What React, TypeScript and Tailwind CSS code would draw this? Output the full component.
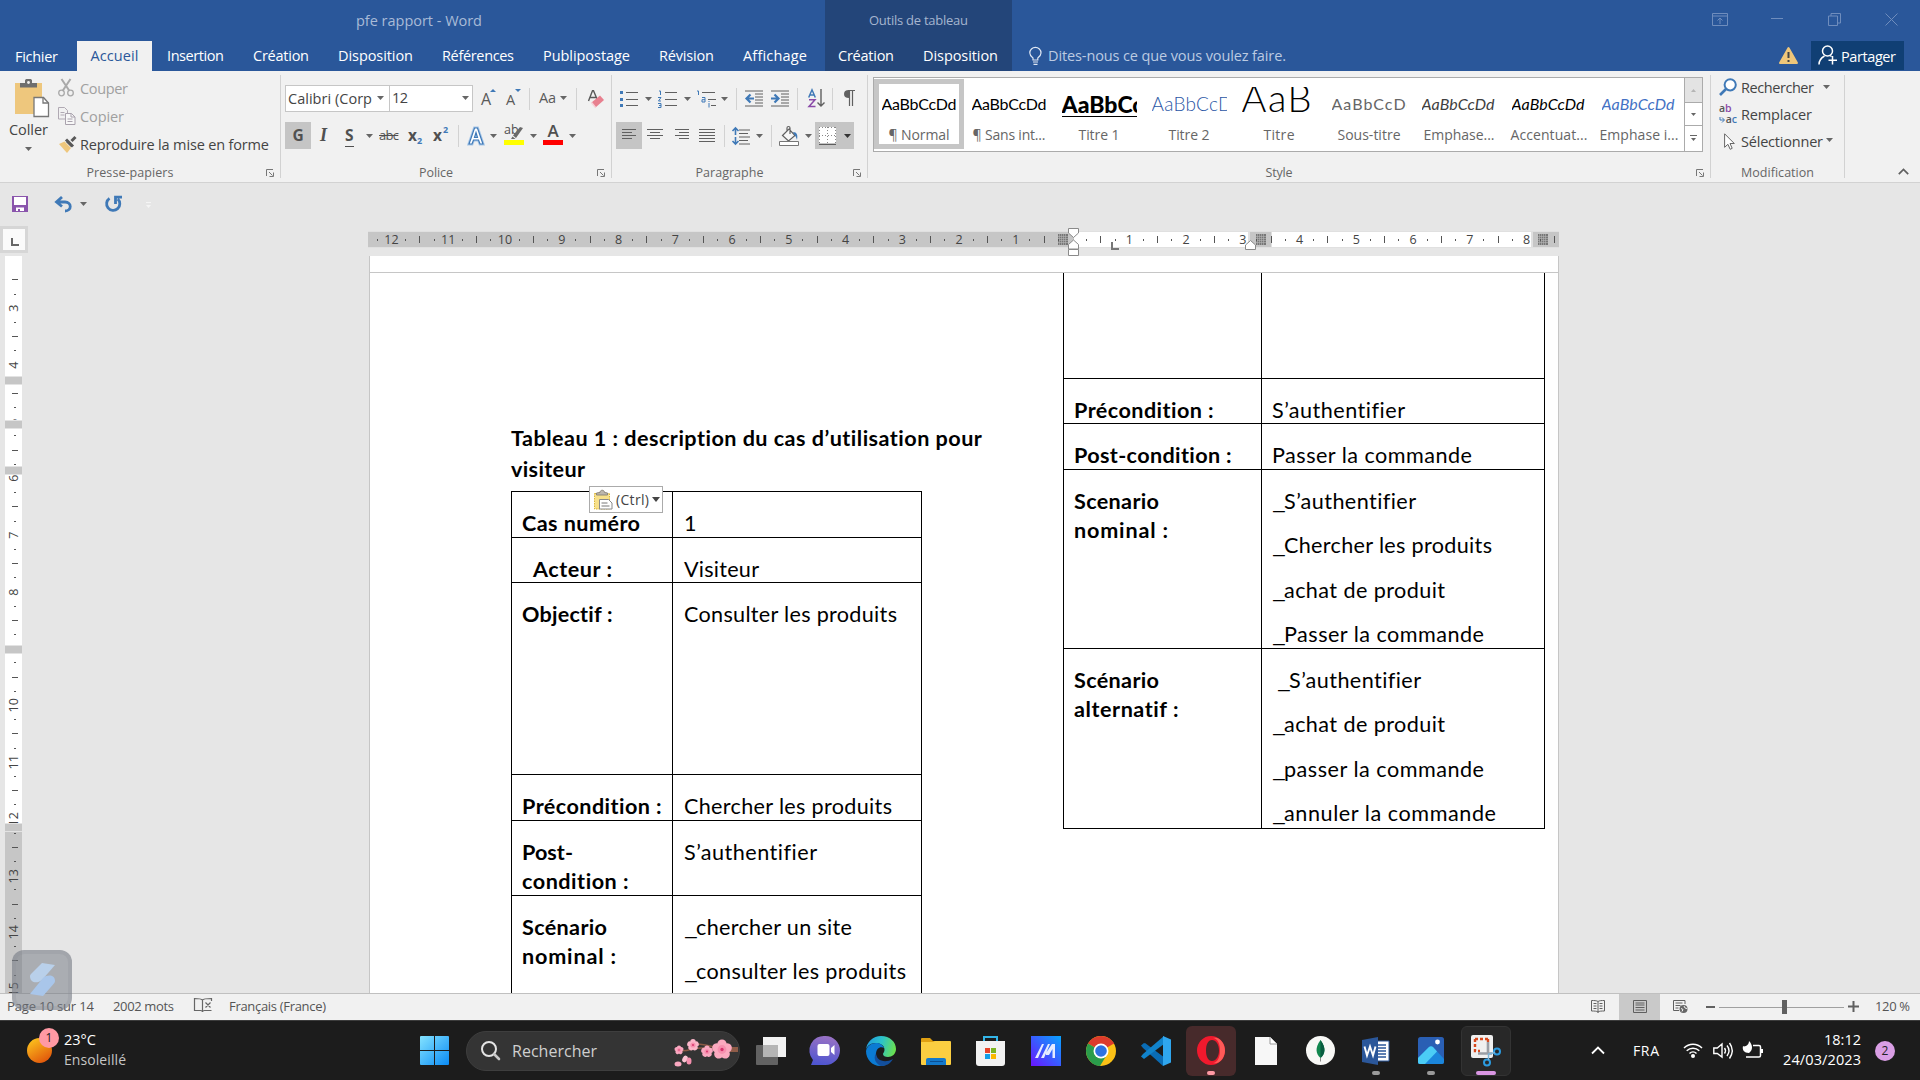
import React, { useLayoutEffect, useRef } from "react";

type Kids = { children?: React.ReactNode; className?: string };

/* Single-line label that spreads its letters over the width of its box. */
function Fit({ children, className = "" }: { children: string; className?: string }) {
  const box = useRef<HTMLSpanElement>(null);
  const inner = useRef<HTMLSpanElement>(null);
  useLayoutEffect(() => {
    const b = box.current;
    const s = inner.current;
    if (!b || !s) return;
    s.style.letterSpacing = "0px";
    const natural = s.getBoundingClientRect().width;
    const n = Math.max(1, children.length - 1);
    s.style.letterSpacing = `${(b.clientWidth - natural) / n}px`;
  }, [children]);
  return (
    <span ref={box} className={`inline-block shrink-0 whitespace-pre ${className}`}>
      <span ref={inner}>{children}</span>
    </span>
  );
}

function Icon({ w, h, className = "", children }: { w: number; h: number } & Kids) {
  return (
    <svg width={w} height={h} viewBox={`0 0 ${w} ${h}`} fill="none" className={`block shrink-0 overflow-visible ${className}`}>
      {children}
    </svg>
  );
}

const Arrow = ({ className = "", color = "#666" }: { className?: string; color?: string }) => (
  <Icon w={7} h={4} className={className}>
    <path d="M0 0h7L3.5 4z" fill={color} />
  </Icon>
);

const Sep = ({ className = "" }: { className?: string }) => <div className={`h-[22px] w-px shrink-0 bg-[#d2d2d2] ${className}`} />;

function Group({ label, labelClass, launcher = true, className = "", children }: { label: string; labelClass: string; launcher?: boolean } & Kids) {
  return (
    <section className={`flex h-[111px] shrink-0 ${className}`}>
      <div className="flex min-w-0 flex-1 flex-col">
        <div className="h-[92px]">{children}</div>
        <div className="flex h-[19px] items-center">
          <div className="flex flex-1 justify-center">
            <Fit className={`text-[12.5px] leading-5 text-[#666] ${labelClass}`}>{label}</Fit>
          </div>
          {launcher && (
            <div className="flex w-[20px] justify-center">
              <Icon w={8} h={8}>
                <path d="M.5 7V.5H7M3 3l3.500 3.500M7.500 3.500v4h-4" stroke="#777" />
              </Icon>
            </div>
          )}
        </div>
      </div>
      <div className="mt-1 h-[103px] w-px bg-[#d2d2d2]" />
    </section>
  );
}

/* ---------- Title bar and tabs ---------- */

function Header() {
  const tab = "text-[14.5px] leading-[30px] text-white";
  return (
    <header className="flex h-[71px] bg-[#2a579a]">
      <div className="flex w-[825px] flex-col">
        <div className="flex h-[41px] items-center pl-[356px]">
          <Fit className="w-[126px] text-[14.5px] text-[#a9bbd7]">pfe rapport - Word</Fit>
        </div>
        <nav className="flex h-[30px]">
          <div className="w-[77px] pl-[15px]"><Fit className={`w-[43px] ${tab} pt-px`}>Fichier</Fit></div>
          <div className="flex w-[75px] justify-center bg-[#f1f1f1]"><Fit className="w-[48px] text-[14.5px] leading-[30px] text-[#2a579a]">Accueil</Fit></div>
          <Fit className={`ml-[15px] w-[57px] ${tab}`}>Insertion</Fit>
          <Fit className={`ml-[29px] w-[56px] ${tab}`}>Création</Fit>
          <Fit className={`ml-[29px] w-[75px] ${tab}`}>Disposition</Fit>
          <Fit className={`ml-[29px] w-[72px] ${tab}`}>Références</Fit>
          <Fit className={`ml-[29px] w-[87px] ${tab}`}>Publipostage</Fit>
          <Fit className={`ml-[29px] w-[55px] ${tab}`}>Révision</Fit>
          <Fit className={`ml-[29px] w-[64px] ${tab}`}>Affichage</Fit>
        </nav>
      </div>
      <div className="flex w-[187px] flex-col bg-[#234579]">
        <div className="flex h-[41px] items-center justify-center pt-px">
          <Fit className="w-[99px] text-[13px] text-[#a5b5cf]">Outils de tableau</Fit>
        </div>
        <div className="flex h-[30px] pl-[13px]">
          <Fit className={`w-[56px] ${tab}`}>Création</Fit>
          <Fit className={`ml-[29px] w-[75px] ${tab}`}>Disposition</Fit>
        </div>
      </div>
      <div className="flex flex-1 flex-col">
        <div className="flex h-[41px] justify-end pt-[13px] pr-[22px]">
          <Icon w={16} h={13}><path d="M.5.5h15v12H.5zM.5 3h15M8 11V5M5.500 7.500 8 5l2.500 2.500" stroke="#6f8dbd" /></Icon>
          <Icon w={12} h={13} className="ml-[43px]"><path d="M0 5.500h12" stroke="#6f8dbd" /></Icon>
          <Icon w={13} h={13} className="ml-[45px]"><path d="M.5 3h9v9.500h-9zM3 3V.5h9.500V10H9.500" stroke="#6f8dbd" /></Icon>
          <Icon w={13} h={13} className="ml-[44px]"><path d="M.5.5l12 12M12.500.5l-12 12" stroke="#6f8dbd" /></Icon>
        </div>
        <div className="flex h-[30px] pl-[17px]">
          <Icon w={13} h={18} className="mt-[6px]">
            <path d="M4 13v-2C2 9.500.8 8 .8 6a5.600 5.600 0 0 1 11.200 0c0 2-1.200 3.500-3.200 5v2zM4 15h5M4.500 17.300h4" stroke="#dfe7f3" strokeWidth="1.200" />
          </Icon>
          <Fit className="ml-[6px] w-[238px] text-[14.5px] leading-[30px] text-[#bccbe2]">Dites-nous ce que vous voulez faire.</Fit>
          <div className="flex-1" />
          <Icon w={19} h={17} className="mt-[6px]">
            <path d="M9.500 1 18 16H1z" fill="#efc67a" stroke="#efc67a" strokeWidth="2" strokeLinejoin="round" /><path d="M9.500 5v6M9.500 13v2" stroke="#444" strokeWidth="2" />
          </Icon>
          <div className="mr-4 ml-[13px] flex h-[29px] w-[93px] bg-[#103f74] pl-[7px]">
            <Icon w={19} h={20} className="mt-1">
              <circle cx="9.500" cy="6" r="5" stroke="#fff" strokeWidth="1.500" />
              <path d="M1 19.500c0-4 2-6.500 5.500-8.500M12 10.500l1.500 1M14.500 11v8.500M10.500 15.300h8.500" stroke="#fff" strokeWidth="1.500" />
            </Icon>
            <Fit className="ml-[4px] w-[55px] text-[14.5px] leading-[31px] text-white">Partager</Fit>
          </div>
        </div>
      </div>
    </header>
  );
}

/* ---------- Ribbon ---------- */

function Clipboard() {
  const t = "text-[14.5px] leading-[20px]";
  return (
    <Group label="Presse-papiers" labelClass="w-[87px]" className="w-[281px]">
      <div className="flex pt-[8px]">
        <div className="w-[57px]">
          <Icon w={36} h={38} className="ml-[14px]">
            <path d="M1 4h27v31H1z" fill="#eec77d" />
            <path d="M6 8.500V4h5V1.500C11 .5 12 0 13 0h3c1 0 2 .5 2 1.500V4h5v4.500z" fill="#6e6e6e" /><circle cx="14.500" cy="3.500" r="1.400" fill="#f1f1f1" />
            <path d="M20 18.500h9.500l5 5.500v13.500H20z" fill="#fff" stroke="#777" strokeWidth="1.300" /><path d="M29 18.500V24h5.500" stroke="#777" strokeWidth="1.300" />
          </Icon>
          <Fit className={`ml-[9px] mt-[2px] w-[39px] text-[#444] ${t}`}>Coller</Fit>
          <Arrow className="mt-[6px] ml-[25px]" />
        </div>
        <div className="flex flex-col">
          <div className="flex h-[28px]">
            <Icon w={17} h={18} className="ml-px">
              <path d="M3.500 0l8 12M12.500 0l-8 12" stroke="#a9a9a9" strokeWidth="2" /><circle cx="3.500" cy="14" r="2.800" stroke="#a9a9a9" strokeWidth="1.300" /><circle cx="12.500" cy="14" r="2.800" stroke="#a9a9a9" strokeWidth="1.300" />
            </Icon>
            <Fit className={`ml-[5px] w-[48px] text-[#a0a0a0] ${t}`}>Couper</Fit>
          </div>
          <div className="flex h-[28px]">
            <Icon w={18} h={18} className="ml-px">
              <path d="M.5.500h6l3 3v8.500h-9zM2.500 5.500h4M2.500 8h4" stroke="#b0a9b3" />
              <path d="M7.500 6.500h6l3.500 3.500v7.500H7.500z" fill="#f7f7f7" stroke="#a9a2ad" /><path d="M9.500 12h5M9.500 14.500h5M13 6.500V10h4" stroke="#a9a2ad" />
            </Icon>
            <Fit className={`ml-[4px] w-[44px] text-[#a0a0a0] ${t}`}>Copier</Fit>
          </div>
          <div className="flex h-[28px]">
            <Icon w={18} h={17} className="ml-[2px] mt-px">
              <path d="M0 8l5.500-2.500 6.500 6.500-4 5z" fill="#eec77d" /><path d="M7 3.500l7 7M8 5l5 5M12.500 5 16.500 1" stroke="#595959" strokeWidth="3" />
            </Icon>
            <Fit className={`ml-[3px] w-[189px] text-[#444] ${t}`}>Reproduire la mise en forme</Fit>
          </div>
        </div>
      </div>
    </Group>
  );
}

function FontGroup() {
  return (
    <Group label="Police" labelClass="w-[34px]" className="w-[331px]">
      <div className="flex h-[41px] items-center pt-[14px] pl-1">
        <div className="flex h-[27px] w-[104px] items-center border border-r-0 border-[#c6c6c6] bg-white pb-[2px] pl-[2px]">
          <div className="w-[85px] overflow-hidden"><Fit className="w-[84px] text-[14.5px] text-[#444]">Calibri (Corp</Fit></div>
          <Arrow className="ml-[4px]" />
        </div>
        <div className="flex h-[27px] w-[84px] items-center border border-[#c6c6c6] bg-white pb-[2px] pl-[2px]">
          <Fit className="w-[16px] text-[14.5px] text-[#444]">12</Fit>
          <Arrow className="ml-[54px]" />
        </div>
        <div className="ml-2 flex w-4 text-[16px] leading-[20px] text-[#5a5a5a]">A<Icon w={6} h={3} className="-ml-px"><path d="M0 3h6L3 0z" fill="#3f79b7" /></Icon></div>
        <div className="ml-[9px] flex w-[15px] pt-[2px] text-[14.5px] leading-[20px] text-[#5a5a5a]">A<Icon w={6} h={3} className="mt-[-1px]"><path d="M0 0h6L3 3z" fill="#3f79b7" /></Icon></div>
        <Sep className="ml-2" />
        <Fit className="ml-[9px] w-[17px] pb-[2px] text-[14.5px] text-[#5a5a5a]">Aa</Fit>
        <Arrow className="-mt-[2px] ml-[4px]" />
        <Sep className="ml-[9px]" />
        <Icon w={16} h={18} className="ml-[11px]">
          <path d="M.5 11 4.500.800h1L9 9M2 7.500h6" stroke="#5a5a5a" strokeWidth="1.400" /><path d="M3.500 12.500 12 5.500l4 4.500-8.500 7.500z" fill="#e8808f" /><path d="M3.500 12.500l4 5" stroke="#f7d2d8" strokeWidth="1.500" />
        </Icon>
      </div>
      <div className="mt-[10px] flex h-[27px] items-center pl-1 text-[#505050]">
        <div className="flex h-[27px] w-[26px] items-center justify-center bg-[#c5c5c5] text-[15.5px] font-bold">G</div>
        <span className="ml-[9px] w-2 font-['Liberation_Serif'] text-[18px] font-bold italic">I</span>
        <span className="ml-[17px] w-[10px] text-[15.5px] leading-[15px] font-bold"><span className="border-b-[1.5px] border-[#505050]">S</span></span>
        <Arrow className="ml-[11px]" />
        <Fit className="ml-[6px] w-5 pt-px text-[13px] line-through">abc</Fit>
        <span className="relative ml-[9px] w-[14px] text-[15.5px] font-bold">x<span className="absolute top-[10px] left-[9px] text-[9px] text-[#3f79b7]">2</span></span>
        <span className="relative ml-[11px] w-[15px] text-[15.5px] font-bold">x<span className="absolute -top-[1px] left-[10px] text-[9px] text-[#3f79b7]">2</span></span>
        <Sep className="ml-[10px]" />
        <Icon w={16} h={18} className="ml-[9px]">
          <path d="M1 17 6.500 1h3L15 17h-3l-1.500-4h-5L4 17zM6.500 10.500h3L8 5.500z" stroke="#a9c8e8" strokeWidth="3" /><path d="M1 17 6.500 1h3L15 17h-3l-1.500-4h-5L4 17zM6.500 10.500h3L8 5.500z" fill="#fff" stroke="#3f79b7" strokeWidth="1.200" />
        </Icon>
        <Arrow className="ml-[6px]" />
        <div className="relative ml-[7px] h-[22px] w-5 text-[12.5px] leading-[10px]">
          ab
          <Icon w={13} h={14} className="absolute top-[2px] left-[6px]"><path d="M13 1 6 11l-3-2.500L10 0z" fill="#6a6a6a" /><path d="M2.500 9.500 5.500 12H1z" fill="#6a6a6a" /></Icon>
          <div className="absolute top-[15px] h-[5px] w-5 bg-[#ff0]" />
        </div>
        <Arrow className="ml-[6px]" />
        <div className="ml-[6px] flex h-[22px] w-5 flex-col items-center">
          <span className="h-[15px] text-[17px] leading-[12px] font-semibold">A</span>
          <div className="h-[5px] w-5 bg-[#f00]" />
        </div>
        <Arrow className="ml-[6px]" />
      </div>
    </Group>
  );
}

const Lines = ({ rows, w = 16, className = "" }: { rows: [number, number][]; w?: number; className?: string }) => (
  <Icon w={w} h={15} className={className}>
    {rows.map(([a, b], i) => <path key={i} d={`M${a} ${i * 3 + 1.5}H${b}`} stroke="#606060" />)}
  </Icon>
);

function Paragraph() {
  return (
    <Group label="Paragraphe" labelClass="w-[68px]" className="w-[256px]">
      <div className="flex h-[41px] items-center pt-[14px]">
        <Icon w={18} h={18} className="ml-2">
          <path d="M6 2.500h12M6 9.500h12M6 15.500h12" stroke="#606060" /><path d="M0 1h3v3H0zM0 8h3v3H0zM0 14h3v3H0z" fill="#3f79b7" />
        </Icon>
        <Arrow className="ml-[7px]" />
        <Icon w={19} h={18} className="ml-[6px]">
          <path d="M7 2.500h12M7 9.500h12M7 15.500h12" stroke="#606060" /><path d="M1 1h1.500v4M0 7.500h3L.5 11H3M0 13.500h3v4H0M1 15.500h2" stroke="#3f79b7" />
        </Icon>
        <Arrow className="ml-[7px]" />
        <Icon w={19} h={18} className="ml-[6px]">
          <path d="M5 2.500h13M11 9.500h8M14 15.500h5" stroke="#606060" /><path d="M0 1h1.500v4M5 7.500h3V12H5V9.700h3M12 12v-1M12 13v4.500" stroke="#3f79b7" />
        </Icon>
        <Arrow className="ml-[5px]" />
        <Sep className="ml-2" />
        <Icon w={18} h={17} className="ml-2">
          <path d="M0 1h18M10 4h8M10 7h8M10 10h8M10 13h8M0 16h18" stroke="#606060" /><path d="M9 8.500H2M5.500 4.500l-4 4 4 4" stroke="#3f79b7" strokeWidth="2.200" />
        </Icon>
        <Icon w={18} h={17} className="ml-2">
          <path d="M0 1h18M10 4h8M10 7h8M10 10h8M10 13h8M0 16h18" stroke="#606060" /><path d="M0 8.500h7M3.500 4.500l4 4-4 4" stroke="#3f79b7" strokeWidth="2.200" />
        </Icon>
        <Sep className="ml-2" />
        <Icon w={17} h={19} className="ml-[10px]">
          <path d="M.7 8.500 4 .800l3.300 7.700M2 6h4" stroke="#3f79b7" strokeWidth="1.500" /><path d="M1 10.800h6L1 17.500h6.500" stroke="#8a4aa8" strokeWidth="1.500" /><path d="M13 0v17M9.500 13.500 13 17l3.500-3.500" stroke="#606060" strokeWidth="1.400" />
        </Icon>
        <Sep className="ml-[7px]" />
        <Icon w={12} h={17} className="ml-[10px]">
          <path d="M5 .5h7M6.500.5v15.500M9.500.5v15.500" stroke="#606060" strokeWidth="1.200" /><path d="M6 0C2.500 0 1 1.500 1 4s1.500 4 5 4z" fill="#606060" />
        </Icon>
      </div>
      <div className="mt-[10px] flex h-[27px] items-center">
        <div className="ml-1 flex h-[27px] w-[26px] items-center justify-center bg-[#c5c5c5]"><Lines w={14} rows={[[0, 14], [0, 10], [0, 14], [0, 10]]} /></div>
        <Lines className="ml-[5px]" rows={[[0, 16], [3, 13], [0, 16], [3, 13]]} />
        <Lines className="ml-[10px]" rows={[[2, 16], [6, 16], [2, 16], [6, 16]]} />
        <Lines className="ml-[10px]" rows={[[0, 16], [0, 16], [0, 16], [0, 16], [0, 16]]} />
        <Sep className="ml-[9px]" />
        <Icon w={18} h={18} className="ml-[7px]">
          <path d="M7 3h11M7 6.500h9M7 10h11M7 13.500h9M7 17h11" stroke="#606060" /><path d="M3.500 1v7M3.500 10v7M.5 4l3-3 3 3M.5 14l3 3 3-3" stroke="#3f79b7" strokeWidth="1.600" />
        </Icon>
        <Arrow className="ml-[6px]" />
        <Sep className="ml-2" />
        <Icon w={20} h={20} className="ml-[7px]">
          <path d="M3.500 9.500 10 3l6 6.500-6.500 5.500zM8 6V2c0-2 3-2 3 0v6" stroke="#606060" strokeWidth="1.200" fill="#f7f7f7" /><path d="M14 6c4 0 5 3 4 8-1-3-1.500-4-2.500-5z" fill="#3f79b7" /><path d="M.5 15.500h19v4H.5z" fill="#fff" stroke="#777" />
        </Icon>
        <Arrow className="ml-[6px]" />
        <div className="ml-[3px] flex h-[27px] w-[39px] items-center bg-[#c5c5c5] pl-1">
          <Icon w={17} h={18}>
            <path d="M0 0h17v18H0z" fill="#fff" /><path d="M.5 0v17M16.500 0v17M0 .5h17M8.500 0v17M0 8.500h17" stroke="#888" strokeDasharray="1 2" /><path d="M0 17.300h17" stroke="#555" strokeWidth="1.300" />
          </Icon>
          <Arrow className="ml-[8px]" color="#333" />
        </div>
      </div>
    </Group>
  );
}

const styleCells: { sample: string; cls: string; name: string; nameCls: string }[] = [
  { sample: "AaBbCcDd", cls: "w-[75px] text-[16px] text-black", name: "¶ Normal", nameCls: "w-[61px]" },
  { sample: "AaBbCcDd", cls: "w-[75px] text-[16px] text-black", name: "¶ Sans int...", nameCls: "w-[73px]" },
  { sample: "AaBbCc", cls: "w-[82px] text-[23px] font-black text-black underline decoration-2 underline-offset-3", name: "Titre 1", nameCls: "w-[41px]" },
  { sample: "AaBbCcD", cls: "w-[81px] text-[19px] font-light text-[#2b57a5]", name: "Titre 2", nameCls: "w-[41px]" },
  { sample: "AaB", cls: "w-[70px] text-[38px] leading-[39px] font-light text-black", name: "Titre", nameCls: "w-[31px]" },
  { sample: "AaBbCcDd", cls: "w-[84px] text-[16px] text-[#666]", name: "Sous-titre", nameCls: "w-[63px]" },
  { sample: "AaBbCcDd", cls: "w-[73px] text-[16px] italic text-[#404040]", name: "Emphase...", nameCls: "w-[71px]" },
  { sample: "AaBbCcDd", cls: "w-[73px] text-[16px] italic text-black", name: "Accentuat...", nameCls: "w-[77px]" },
  { sample: "AaBbCcDd", cls: "w-[73px] text-[16px] italic text-[#4472c4]", name: "Emphase i...", nameCls: "w-[79px]" },
];

function Styles() {
  return (
    <Group label="Style" labelClass="w-[27px]" className="w-[843px]">
      <div className="pt-[6px] pl-[5px]">
        <div className="flex h-[75px] w-[830px] border border-[#ababab] bg-white">
          {styleCells.map((s, i) => (
            <div key={i} className={`mt-px flex h-[70px] w-[90px] shrink-0 flex-col items-center ${i === 0 ? "border-5 border-[#c6c6c6]" : "border-5 border-transparent"}`}>
              <div className="mt-[3px] flex h-[30px] w-[75px] shrink-0 items-end overflow-hidden font-[Lato] leading-[26px]">
                <Fit className={s.cls}>{s.sample}</Fit>
              </div>
              <Fit className={`mt-[8px] text-[14px] leading-[20px] text-[#666] ${s.nameCls}`}>{s.name}</Fit>
            </div>
          ))}
          <div className="flex flex-1 flex-col border-l border-[#ababab]">
            <div className="flex h-[25px] items-center justify-center border-b border-[#ababab] bg-[#e3e3e3]"><Icon w={5} h={3}><path d="M0 3h5L2.500 0z" fill="#b5b5b5" /></Icon></div>
            <div className="flex h-[23px] items-center justify-center border-b border-[#ababab]"><Icon w={5} h={3}><path d="M0 0h5L2.500 3z" fill="#666" /></Icon></div>
            <div className="flex flex-1 items-center justify-center"><Icon w={7} h={7}><path d="M0 .5h7" stroke="#666" /><path d="M1 3h5L3.500 6z" fill="#666" /></Icon></div>
          </div>
        </div>
      </div>
    </Group>
  );
}

function Editing() {
  const t = "text-[14.5px] leading-[20px] text-[#444]";
  return (
    <Group label="Modification" labelClass="w-[73px]" launcher={false} className="w-[134px]">
      <div className="flex flex-col pt-[7px] pl-[8px]">
        <div className="flex h-[27px]">
          <Icon w={18} h={18}><circle cx="11.200" cy="6.800" r="5.600" stroke="#3f79b7" strokeWidth="2" fill="#fff" /><path d="M7 11 1 17" stroke="#3f79b7" strokeWidth="2.600" /></Icon>
          <Fit className={`ml-1 w-[73px] ${t}`}>Rechercher</Fit>
          <Arrow className="mt-[7px] ml-[9px]" />
        </div>
        <div className="flex h-[27px]">
          <div className="w-[18px] text-[10.5px] leading-[7px] font-semibold">
            <div className="h-[11px] text-[#555]">a<span className="text-[#8a4aa8]">b</span></div>
            <div className="flex items-center justify-between"><Icon w={6} h={6}><path d="M1 0v3h4M3 .5 5.500 3 3 5.500" stroke="#3f79b7" /></Icon><span className="text-[#555]">a<span className="text-[#3f79b7]">c</span></span></div>
          </div>
          <Fit className={`ml-1 w-[71px] ${t}`}>Remplacer</Fit>
        </div>
        <div className="flex h-[27px]">
          <Icon w={11} h={17} className="mt-px ml-[5px]"><path d="M.6.800v13.500l3.300-3 2.300 5 2-1-2.200-4.800h4.300z" fill="#fff" stroke="#666" /></Icon>
          <Fit className={`ml-[6px] w-[82px] ${t}`}>Sélectionner</Fit>
          <Arrow className="mt-[6px] ml-[3px]" />
        </div>
      </div>
    </Group>
  );
}

function Ribbon() {
  return (
    <div className="flex h-[112px] border-b border-[#d2d2d2] bg-[#f1f1f1]">
      <Clipboard />
      <FontGroup />
      <Paragraph />
      <Styles />
      <Editing />
      <div className="flex flex-1 items-end justify-end pr-[11px] pb-[7px]">
        <Icon w={11} h={7}><path d="M.8 6.200 5.500 1.500l4.700 4.700" stroke="#606060" strokeWidth="1.700" /></Icon>
      </div>
    </div>
  );
}

function QuickAccess() {
  return (
    <div className="flex h-[43px] pt-[13px] pl-[12px]">
      <Icon w={16} h={16}><path d="M0 0h16v16H0z" fill="#8a55ac" /><path d="M2 1h12v8H2zM4 11.500h8V15H4z" fill="#fff" /><path d="M6 13h2v2H6z" fill="#8a55ac" /></Icon>
      <Icon w={18} h={16} className="ml-[26px]"><path d="M2.500 6H11c7 0 7 9 0 9M8 1 2.500 6 8 10.500" stroke="#3f79b7" strokeWidth="2.800" /></Icon>
      <Arrow className="mt-[6px] ml-[8px]" />
      <Icon w={17} h={16} className="ml-[18px]"><path d="M4.500 2.300A6.600 6.600 0 1 0 12.800 3M10.500 8V1.200H17" stroke="#3f79b7" strokeWidth="2.800" /></Icon>
      <Icon w={5} h={6} className="mt-[6px] ml-[24px]"><path d="M0 .5h5" stroke="#f5f5f5" /><path d="M0 3h5L2.500 6z" fill="#f5f5f5" /></Icon>
    </div>
  );
}

/* ---------- Rulers ---------- */

const hMarks = Array.from({ length: 84 }, (_, i) => i - 49);
const vMarks = Array.from({ length: 51 }, (_, i) => i + 10);

const Grid = ({ className = "" }: { className?: string }) => (
  <Icon w={10} h={11} className={className}>
    <path d="M0 0h10v11H0z" fill="#777" />
    <path d="M1.500 0v11M3.500 0v11M5.500 0v11M7.500 0v11M0 2.500h10M0 4.500h10M0 6.500h10M0 8.500h10" stroke="#b5b5b5" strokeWidth=".6" />
  </Icon>
);

function HRuler() {
  return (
    <div className="relative ml-[368px] h-[17px] w-[1191px]">
      <div className="flex h-[17px] items-center border-y border-[#e0e0e0]">
        <div className="flex h-full w-[706px] items-center bg-[#c6c6c6] pl-[690px]"><Grid /></div>
        <div className="h-full w-[174px] bg-white" />
        <div className="flex h-full w-[23px] items-center border-l-2 border-[#e0e0e0] bg-[#c6c6c6] pl-[6px]"><Grid /></div>
        <div className="h-full w-[260px] border-l border-[#e0e0e0] bg-white" />
        <div className="flex h-full flex-1 items-center border-l-2 border-[#e0e0e0] bg-[#c6c6c6] pl-[5px]"><Grid /></div>
      </div>
      <div className="absolute top-0 left-[2.2px] flex h-[17px] items-center text-[12.5px] leading-[17px] text-[#444]">
        {hMarks.map((k) => (
          <div key={k} className="flex w-[14.19px] shrink-0 justify-center">
            {k === 0 ? null : k % 4 === 0 ? <span>{Math.abs(k / 4)}</span> : k % 2 === 0 ? <i className="h-[7px] w-px bg-[#555]" /> : <i className="h-[2px] w-px bg-[#555]" />}
          </div>
        ))}
      </div>
      <Icon w={11} h={28} className="absolute -top-[3px] left-[700px]">
        <path d="M.5.5h10v4.500l-5 4.500-5-4.500zM.5 21v-4.500l5-4.500 5 4.500V21zM.5 21.500h10v6H.5z" fill="#fff" stroke="#8a8a8a" />
      </Icon>
      <Icon w={11} h={10} className="absolute top-[9px] left-[877px]"><path d="M.5 9.500V5l5-4.500 5 4.500v4.500z" fill="#fff" stroke="#8a8a8a" /></Icon>
      <Icon w={8} h={8} className="absolute top-[11px] left-[743px]"><path d="M1 0v7h7" stroke="#777" strokeWidth="2" /></Icon>
    </div>
  );
}

const Bar = ({ className }: { className: string }) => <div className={`absolute left-0 h-[9px] w-full border-y border-[#e3e3e3] bg-[#c6c6c6] ${className}`} />;

function VRuler() {
  return (
    <div className="relative ml-[5px] h-[737px] w-[17px] shrink-0 overflow-hidden">
      <div className="h-[568px] bg-white" />
      <div className="h-[169px] bg-[#c6c6c6]" />
      <div className="absolute top-[16.8px] left-0 flex w-full flex-col text-[12.5px] text-[#444]">
        {vMarks.map((k) => (
          <div key={k} className="flex h-[14.19px] shrink-0 items-center justify-center pl-[2px]">
            {k % 4 === 0 ? <span className="-rotate-90 leading-none">{k / 4}</span> : k % 2 === 0 ? <i className="h-px w-[6px] bg-[#555]" /> : <i className="h-px w-[2px] bg-[#555]" />}
          </div>
        ))}
      </div>
      <Bar className="top-[120px]" />
      <Bar className="top-[164px]" />
      <Bar className="top-[210px]" />
      <Bar className="top-[389px]" />
      <Bar className="top-[567px]" />
    </div>
  );
}

/* ---------- Document ---------- */

type Item = [string, string];

const leftRows: { h: string; label: Item[]; value: Item[] }[] = [
  { h: "h-[46px]", label: [["Cas numéro", "w-[118px]"]], value: [["1", "w-[11px]"]] },
  { h: "h-[45px]", label: [["Acteur :", "w-[79px] ml-[11px]"]], value: [["Visiteur", "w-[75px]"]] },
  { h: "h-[192px]", label: [["Objectif :", "w-[91px]"]], value: [["Consulter les produits", "w-[213px]"]] },
  { h: "h-[46px]", label: [["Précondition :", "w-[140px]"]], value: [["Chercher les produits", "w-[208px]"]] },
  { h: "h-[75px]", label: [["Post-", "w-[51px]"], ["condition :", "w-[107px]"]], value: [["S’authentifier", "w-[133px]"]] },
  { h: "h-[99px]", label: [["Scénario", "w-[85px]"], ["nominal :", "w-[94px]"]], value: [["_chercher un site", "w-[156px]"], ["_consulter les produits", "w-[210px]"]] },
];

const rightRows: { h: string; label: Item[]; value: Item[] }[] = [
  { h: "h-[105px]", label: [], value: [] },
  { h: "h-[45px]", label: [["Précondition :", "w-[140px]"]], value: [["S’authentifier", "w-[133px]"]] },
  { h: "h-[46px]", label: [["Post-condition :", "w-[158px]"]], value: [["Passer la commande", "w-[200px]"]] },
  { h: "h-[179px]", label: [["Scenario", "w-[85px]"], ["nominal :", "w-[94px]"]], value: [["_S’authentifier", "w-[132px]"], ["_Chercher les produits", "w-[208px]"], ["_achat de produit", "w-[161px]"], ["_Passer la commande", "w-[200px]"]] },
  { h: "h-[180px]", label: [["Scénario", "w-[85px]"], ["alternatif :", "w-[105px]"]], value: [[" _S’authentifier", "w-[132px]"], ["_achat de produit", "w-[161px]"], ["_passer la commande", "w-[200px]"], ["_annuler la commande", "w-[212px]"]] },
];

/* A value line; a leading underscore acts as the list marker. */
function Line({ text, width }: { text: string; width: string }) {
  const at = text.indexOf("_");
  if (at < 0) return <Fit className={width}>{text}</Fit>;
  return (
    <div className={`flex ${at > 0 ? "pl-[5px]" : ""}`}>
      <span className="w-[12px] shrink-0"><span className="inline-block origin-left scale-x-[1.4]">_</span></span>
      <Fit className={width}>{text.slice(at + 1)}</Fit>
    </div>
  );
}

function Cells({ label, value, split, inset }: { label: Item[]; value: Item[]; split: string; inset: string }) {
  return (
    <>
      <div className={`flex shrink-0 flex-col border-r border-black pt-[16.5px] pl-[10px] font-bold ${split}`}>
        {label.map(([t, c]) => <Fit key={t} className={c}>{t}</Fit>)}
      </div>
      <div className={`flex flex-col gap-[15.6px] pt-[16.5px] ${inset}`}>
        {value.map(([t, c]) => <Line key={t} text={t} width={c} />)}
      </div>
    </>
  );
}

function PasteOptions() {
  return (
    <div className="absolute -top-[5px] left-[77px] flex h-[27px] w-[74px] items-center border border-[#ababab] bg-white pl-[4px]">
      <Icon w={19} h={20}>
        <path d="M.5 3.500h15v15.500H.5z" fill="#f7e08a" stroke="#d9b53a" strokeDasharray="1.500 1" /><path d="M2.500 5v-2L6 2.500C6-.5 10.500-.5 10.500 2.500L13.500 3v2z" fill="#bdb7ad" stroke="#8c857b" /><path d="M5.500 9.500h9l3.500 3.500v6H5.500z" fill="#fff" stroke="#8a8a8a" /><path d="M7.500 13h6M7.500 16h8" stroke="#777" />
      </Icon>
      <Fit className="ml-[3px] w-[33px] font-['Open_Sans'] text-[14px] leading-[20px] text-[#444]">(Ctrl)</Fit>
      <Icon w={8} h={5} className="ml-[3px]"><path d="M0 0h8L4 5z" fill="#444" /></Icon>
    </div>
  );
}

function Page() {
  return (
    <div className="ml-[347px] h-[737px] w-[1190px] overflow-hidden border-x border-[#c6c6c6] bg-white">
      <div className="h-[17px] border-b border-[#c6c6c6]" />
      <div className="flex font-[Lato] text-[21.6px] leading-[29px] text-black">
        <div className="w-[693px] shrink-0 pt-[150px] pl-[141px]">
          <div className="-mt-[0.5px] flex h-[68.5px] flex-col leading-[31px] font-bold">
            <Fit className="w-[472px]">Tableau 1 : description du cas d’utilisation pour</Fit>
            <Fit className="w-[74px]">visiteur</Fit>
          </div>
          <div className="relative w-[411px] border-x border-black">
            {leftRows.map((r, i) => (
              <div key={i} className={`flex border-t border-black ${r.h}`}><Cells label={r.label} value={r.value} split="w-[161px]" inset="pl-[11px]" /></div>
            ))}
            <PasteOptions />
          </div>
        </div>
        <div className="h-[556px] w-[482px] shrink-0 border-x border-b border-black">
          {rightRows.map((r, i) => (
            <div key={i} className={`flex ${i ? "border-t border-black" : ""} ${r.h}`}><Cells label={r.label} value={r.value} split="w-[198px]" inset="pl-[10px]" /></div>
          ))}
        </div>
      </div>
    </div>
  );
}

/* ---------- Status bar ---------- */

function StatusBar() {
  const t = "text-[13px] leading-[24px] pb-[2px] text-[#555]";
  return (
    <footer className="relative flex h-[27px] items-center border-t border-[#c0c0c0] bg-[#f1f1f1] pl-[7px]">
      <Fit className={`w-[87px] ${t}`}>Page 10 sur 14</Fit>
      <Fit className={`ml-[19px] w-[61px] ${t}`}>2002 mots</Fit>
      <Icon w={18} h={15} className="-mt-[3px] ml-[20px]"><path d="M8.500 13.500V2M8.500 2C7 .5 5 .5.5.5v12h6c1 0 2 .5 2 1.500 0-1 1-1.500 2-1.500h7M8.500 2c1-1.500 3-1.500 9-1.500v2.500M11.500 4.500l5 5M16.500 4.500l-5 5" stroke="#666" strokeWidth="1.200" /></Icon>
      <Fit className={`ml-[17px] w-[97px] ${t}`}>Français (France)</Fit>
      <div className="flex-1" />
      <Icon w={14} h={13} className="-mt-[2px]"><path d="M7 2v11M7 1.500C5.500.5 3 .5.5.5v10.500c3 0 5 0 6.500 1 1.500-1 3.500-1 6.500-1V.5c-3 0-5 0-6.500 1M2.500 3.500h3M2.500 6h3M2.500 8.500h3M8.500 3.500h3M8.500 6h3M8.500 8.500h3" stroke="#606060" /></Icon>
      <div className="ml-[14px] flex h-[26px] w-[41px] items-center justify-center bg-[#c9c9c9] pb-[2px]">
        <Icon w={14} h={13}><path d="M.5.5h13v12H.5zM2.500 3h9M2.500 5h9M2.500 7.500h9M2.500 10h9" stroke="#606060" /></Icon>
      </div>
      <Icon w={15} h={13} className="-mt-[2px] ml-[13px]"><path d="M12 4V.5H.5v10H6M2.500 3h7M2.500 5.500h5M2.500 8h3" stroke="#606060" /><circle cx="10.500" cy="9" r="4" fill="#666" /><path d="M8 8.500l2 1-1 2M11 6l1 2 2 .5" stroke="#f1f1f1" /></Icon>
      <div className="-mt-px ml-[18px] h-[2px] w-[9px] bg-[#606060]" />
      <div className="relative ml-[4px] h-px w-[125px] bg-[#a0a0a0]"><div className="absolute -top-[7px] left-[63px] h-[14px] w-[5px] bg-[#606060]" /></div>
      <Icon w={11} h={11} className="-mt-px ml-[4px]"><path d="M5.500 0v11M0 5.500h11" stroke="#606060" strokeWidth="2" /></Icon>
      <Fit className={`mr-[10px] ml-[16px] w-[35px] ${t}`}>120 %</Fit>
      <div className="absolute -top-[44px] left-[12px] h-[60px] w-[60px] rounded-[12px] border-4 border-[#8a8f99]/25 bg-[#6e737e]/50">
        <Icon w={25} h={33} className="absolute top-[9px] left-[14px]">
          <path d="M12 0 25 2 12 17c-5 4-12 3-12-4 0-1 1-2 2-3z" fill="#b9d0ea" /><path d="M13 33 0 31 13 15c5-4 12-3 12 3 0 1-.5 2-1.500 3z" fill="#a9c6ea" />
        </Icon>
      </div>
    </footer>
  );
}

/* ---------- Taskbar ---------- */

const Petals = ({ x, y, r, c = "#f9a8c0" }: { x: number; y: number; r: number; c?: string }) => (
  <g transform={`translate(${x} ${y})`}>
    {[0, 72, 144, 216, 288].map((a) => <ellipse key={a} cx="0" cy={-r * 0.5} rx={r * 0.42} ry={r * 0.42} fill={c} transform={`rotate(${a})`} />)}
    <circle r={r * 0.4} fill="#f78fae" />
    <circle r={r * 0.15} fill="#d6336c" />
  </g>
);

function Taskbar() {
  return (
    <div className="flex h-[60px] items-center border-t border-[#3c3c3c] bg-[#1c1c1c] text-white">
      <div className="relative ml-[27px] h-[25px] w-[25px]">
        <Icon w={25} h={25}><defs><linearGradient id="sun" x1="0" y1="0" x2=".6" y2="1"><stop stopColor="#ffce1f" /><stop offset="1" stopColor="#e25a0c" /></linearGradient></defs><circle cx="12.500" cy="12.500" r="12.500" fill="url(#sun)" /></Icon>
        <div className="absolute -top-[10px] left-[12px] h-5 w-5 rounded-full bg-[#ff99a4] text-center text-[12px] leading-5 text-[#222]">1</div>
      </div>
      <div className="ml-[12px] flex w-[64px] flex-col pb-[2px]">
        <Fit className="w-[32px] text-[14.5px] leading-[20px]">23°C</Fit>
        <Fit className="w-[62px] text-[14px] leading-[19px] text-[#c6c6c6]">Ensoleillé</Fit>
      </div>
      <Icon w={29} h={29} className="ml-[292px]">
        <defs><linearGradient id="win" x1="0" y1="0" x2="1" y2="1"><stop stopColor="#84e3ff" /><stop offset="1" stopColor="#0a8bf5" /></linearGradient></defs>
        <path d="M0 1q0-1 1-1h13v14H0zM15 0h13q1 0 1 1v13H15zM0 15h14v14H1q-1 0-1-1zM15 15h14v13q0 1-1 1H15z" fill="url(#win)" />
      </Icon>
      <div className="ml-[17px] flex h-10 w-[274px] items-center rounded-full border border-[#3e3e3e] bg-[#343434] pl-[14px]">
        <Icon w={19} h={19}><circle cx="8" cy="8" r="7" stroke="#e4e4e4" strokeWidth="2" /><path d="M13 13l5 5" stroke="#c9c9c9" strokeWidth="2.600" strokeLinecap="round" /></Icon>
        <Fit className="ml-[12px] w-[85px] text-[16px] text-[#cfcfcf]">Rechercher</Fit>
        <Icon w={64} h={28} className="mt-[4px] ml-[78px]">
          <path d="M4 12q8 0 14-2t24 0M20 5q10 0 22 4" stroke="#8a5a44" strokeWidth="1.600" /><path d="M50 10.500h13" stroke="#8f5c48" strokeWidth="5" />
          <Petals x={4} y={11} r={5} /><Petals x={18} y={6} r={6.5} c="#fbb6ca" /><Petals x={32} y={12.500} r={6.5} /><Petals x={47} y={10.500} r={11} c="#fba9bf" />
          <ellipse cx="3" cy="25" rx="3.500" ry="2.500" fill="#f9a8c0" /><ellipse cx="10" cy="20" rx="2.500" ry="3.500" fill="#fbc3d2" transform="rotate(30 10 20)" /><ellipse cx="14" cy="22" rx="2.500" ry="3.500" fill="#f58fae" />
        </Icon>
      </div>
      <Icon w={30} h={28} className="ml-[16px]"><path d="M7 0h23v20H7z" fill="#f2f2f2" /><rect y="8" width="22" height="20" rx="1" fill="#6a6a6a" fillOpacity=".9" /><path d="M7 8h15v12H7z" fill="#b5b5b5" /></Icon>
      <Icon w={29} h={29} className="ml-[25px]">
        <defs><linearGradient id="chat" x1=".6" y1="0" x2=".4" y2="1"><stop stopColor="#9a72c4" /><stop offset="1" stopColor="#4e55d0" /></linearGradient></defs>
        <path d="M14.500 0a14.500 14.500 0 0 1 0 29H0l2-5A14.500 14.500 0 0 1 14.500 0z" fill="url(#chat)" /><rect x="6.500" y="8" width="12" height="12" rx="2" fill="#fff" /><path d="M20 12l3.500-3v10L20 16z" fill="#fff" />
      </Icon>
      <Icon w={30} h={30} className="ml-[26px]">
        <defs><linearGradient id="ea" x1="0" y1=".3" x2="1" y2=".5"><stop stopColor="#1f9be0" /><stop offset=".5" stopColor="#2cc3c9" /><stop offset="1" stopColor="#6be04e" /></linearGradient></defs>
        <path d="M0 14A15 15 0 0 1 15 0c9 0 15 6 15 13 0 5-4 8-8 8-3 0-5-1-5-3 0-1 1.500-2 1.500-4C18.500 9 14 7 10 7 4 7 1 10 0 14z" fill="url(#ea)" />
        <path d="M0 15c1-5 5-8 10-8 4 0 7 2 8 5-4-2-8 1-8 6 0 7 6 10 10 11-11 4-20-4-20-14z" fill="#0b7bd3" /><path d="M10 17c0 7 8 11 17 6-3 5-7 7-12 7-3-1-9-6-5-13z" fill="#134f9c" />
      </Icon>
      <Icon w={30} h={28} className="ml-[25px]">
        <path d="M0 2q0-1 1-1h8l3 3h8v8H0z" fill="#e0a012" /><path d="M0 5h12l2-1h15q1 0 1 1v22q0 1-1 1H1q-1 0-1-1z" fill="#fbce41" /><path d="M5 28v-5q0-2 2-2h16q2 0 2 2v5z" fill="#1379cc" /><path d="M9 24.500h13" stroke="#0a4f94" />
      </Icon>
      <Icon w={29} h={31} className="ml-[25px]">
        <path d="M8 7V2h13v5" stroke="#33b5e8" strokeWidth="2" /><path d="M0 6h29v22q0 3-3 3H3q-3 0-3-3z" fill="#f2f2f2" /><path d="M9 13h5v5H9z" fill="#e8442a" /><path d="M15 13h5v5h-5z" fill="#7cb522" /><path d="M9 19h5v5H9z" fill="#129fe8" /><path d="M15 19h5v5h-5z" fill="#fbb800" />
      </Icon>
      <Icon w={30} h={30} className="ml-[26px]">
        <defs><linearGradient id="asus" x1="1" y1="0" x2="0" y2="1"><stop stopColor="#08a4ff" /><stop offset="1" stopColor="#6a14ff" /></linearGradient></defs>
        <path d="M0 0h30v30H0z" fill="url(#asus)" /><path d="M4 22 11 8h2L7 22zM10 22l7-14h2l-6 14zM15 17l6-9h3v14h-2.500v-9L18 19h-3z" fill="#e6ebff" />
      </Icon>
      <Icon w={30} h={30} className="ml-[25px]">
        <circle cx="15" cy="15" r="15" fill="#fbc116" /><path d="M15 15 2 7.500A15 15 0 0 1 28 7.500z" fill="#dd3b2c" /><path d="M15 15 2 7.500A15 15 0 0 0 14 30l7-11.500z" fill="#2a9c4b" /><path d="M15 8h13.200L26 5H9z" fill="#dd3b2c" /><circle cx="15" cy="15" r="7.500" fill="#fff" /><circle cx="15" cy="15" r="5.800" fill="#2e72e0" />
      </Icon>
      <Icon w={30} h={30} className="ml-[25px]">
        <path d="M2 9 22 24.500v-4L4 7z" fill="#0a6cb5" /><path d="M0 9.500 3 7l19 14v9L2 12z" fill="#0a6cb5" /><path d="M0 20.500 3 23 23 8V0L2 18z" fill="#1183cb" /><path d="M22 0l8 3.500v23L22 30z" fill="#2fa6ee" />
      </Icon>
      <div className="relative ml-[15px] flex h-[50px] w-[50px] items-center justify-center rounded-md bg-[#472a2b]">
        <Icon w={28} h={29}><path fillRule="evenodd" d="M14 0a14 14.500 0 0 1 0 29 14 14.500 0 0 1 0-29zm1 4c-4 0-6 4.500-6 10.500S11 25 15 25s7-4.500 7-10.500S19 4 15 4z" fill="#f0192d" /><path d="M16 2c6-2 12 5 12 12.500S22 29 16 27c4 0 7-5 7-12.500S20 2 16 2z" fill="#ff5a58" /></Icon>
        <div className="absolute bottom-[1px] h-1 w-2 rounded-full bg-[#ff99a4]" />
      </div>
      <Icon w={22} h={28} className="ml-[19px]"><path d="M0 0h15l7 7v21H0z" fill="#f7f7f7" /><path d="M15 0v7h7" stroke="#999" fill="#fff" /></Icon>
      <Icon w={29} h={29} className="ml-[29px]"><circle cx="14.500" cy="14.500" r="14.500" fill="#f8f8f6" /><path d="M14.500 4c6 8 4.500 14 0 18-4.500-4-6-10 0-18z" fill="#12874f" /><path d="M14.500 4c6 8 4.500 14 0 18z" fill="#0a5c40" /><path d="M14.500 22v3.500" stroke="#888" /></Icon>
      <div className="relative ml-[27px] flex h-[50px] w-[27px] items-center">
        <Icon w={27} h={28}>
          <path d="M13 4h14v20H13z" fill="#fff" stroke="#2b579a" /><path d="M16 8h8M16 11h8M16 14h8M16 17h8M16 20h8" stroke="#2b579a" strokeWidth="1.500" /><path d="M0 3 16 0v28L0 25z" fill="#2b579a" /><path d="M2.500 9.500 5 18.500l3-9 3 9 2.500-9" stroke="#fff" strokeWidth="1.900" />
        </Icon>
        <div className="absolute bottom-[1px] left-[10px] h-1 w-2 rounded-full bg-[#9a9a9a]" />
      </div>
      <div className="relative ml-[29px] flex h-[50px] w-[26px] items-center">
        <Icon w={26} h={28}>
          <rect width="26" height="27" rx="2.500" fill="#2a5fb4" /><path d="M0 21 11 10q2-1.500 4 0l11 12v3q0 2-2 2H2q-2 0-2-2z" fill="#1b86dc" /><path d="M0 21 11 10q2-1.500 4 0l4 4.500L7 27H2q-2 0-2-2z" fill="#4bcdf6" /><circle cx="19.500" cy="5" r="2.400" fill="#fff" />
        </Icon>
        <div className="absolute bottom-[1px] left-[9px] h-1 w-2 rounded-full bg-[#9a9a9a]" />
      </div>
      <div className="relative ml-[17px] flex h-[50px] w-[50px] items-center justify-center rounded-md border border-[#333] bg-[#282828]">
        <Icon w={30} h={31}>
          <rect y="0" width="22" height="23" rx="2" fill="#f0f0f0" /><path d="M4 4h13M4 4v12h5M17 4v3" stroke="#d8481c" strokeWidth="2.400" strokeDasharray="3 2" /><path d="M17 7v12M7 18.500h14" stroke="#9a9ea5" strokeWidth="2.600" /><circle cx="26" cy="16.500" r="3" stroke="#2c9be0" strokeWidth="2" /><circle cx="16" cy="27.500" r="3" stroke="#2c9be0" strokeWidth="2" /><path d="M17.500 25v-6L24 17.500" stroke="#7db4d8" strokeWidth="1.500" />
        </Icon>
        <div className="absolute bottom-0 h-1 w-5 rounded-full bg-[#d996e3]" />
      </div>
      <Icon w={14} h={9} className="ml-[80px]"><path d="M1 7.500 7 1.500l6 6" stroke="#fff" strokeWidth="1.800" /></Icon>
      <Fit className="ml-[28px] w-[26px] pb-px text-[14px]">FRA</Fit>
      <Icon w={20} h={16} className="-mt-[2px] ml-[24px]">
        <path d="M1 6a12.700 12.700 0 0 1 18 0M3.700 8.800a9 9 0 0 1 12.600 0M6.500 11.500a5 5 0 0 1 7 0" stroke="#fff" strokeWidth="1.500" /><circle cx="10" cy="14" r="2" fill="#fff" />
      </Icon>
      <Icon w={20} h={17} className="-mt-px ml-[10px]"><path d="M.8 6h3.500L9 2v13L4.300 11.500H.8zM11.500 6q2 2.500 0 5.500M14 3.500q4 5 0 10.500M16.500 1q5.500 7.500 0 15.500" stroke="#fff" strokeWidth="1.400" /></Icon>
      <Icon w={20} h={17} className="-mt-[3px] ml-[10px]"><path d="M10 4.500h6q1.500 0 1.500 1.500v8.500q0 1.500-1.500 1.500H3" stroke="#fff" strokeWidth="1.500" /><path d="M18 8h2v4h-2z" fill="#fff" /><path d="M6 0c4 4 4 9 0 12-5 0-7-3-6-7 1 1 2 0 3 0 2-1 3-3 3-5z" fill="#fff" /></Icon>
      <div className="ml-[20px] flex w-[78px] flex-col items-end pb-[2px]">
        <Fit className="w-[37px] text-[14.5px] leading-[20px]">18:12</Fit>
        <Fit className="w-[78px] text-[14.5px] leading-[19px]">24/03/2023</Fit>
      </div>
      <div className="ml-[14px] h-5 w-5 rounded-full bg-[#d99ee4] text-center text-[12px] leading-5 text-[#222]">2</div>
    </div>
  );
}

export default function App() {
  return (
    <div className="flex h-[1080px] w-[1920px] flex-col overflow-hidden bg-[#e6e6e6] font-['Open_Sans',sans-serif]">
      <Header />
      <Ribbon />
      <QuickAccess />
      <div className="flex h-[30px]">
        <div className="h-[27px] w-[28px] border-3 border-[#d6d6d6] bg-[#fafafa]">
          <Icon w={8} h={8} className="mt-[9px] ml-[8px]"><path d="M1 0v7h7" stroke="#666" strokeWidth="2" /></Icon>
        </div>
        <div className="-ml-[28px] pt-[5px]"><HRuler /></div>
      </div>
      <main className="flex h-[737px]">
        <VRuler />
        <Page />
      </main>
      <StatusBar />
      <Taskbar />
    </div>
  );
}
